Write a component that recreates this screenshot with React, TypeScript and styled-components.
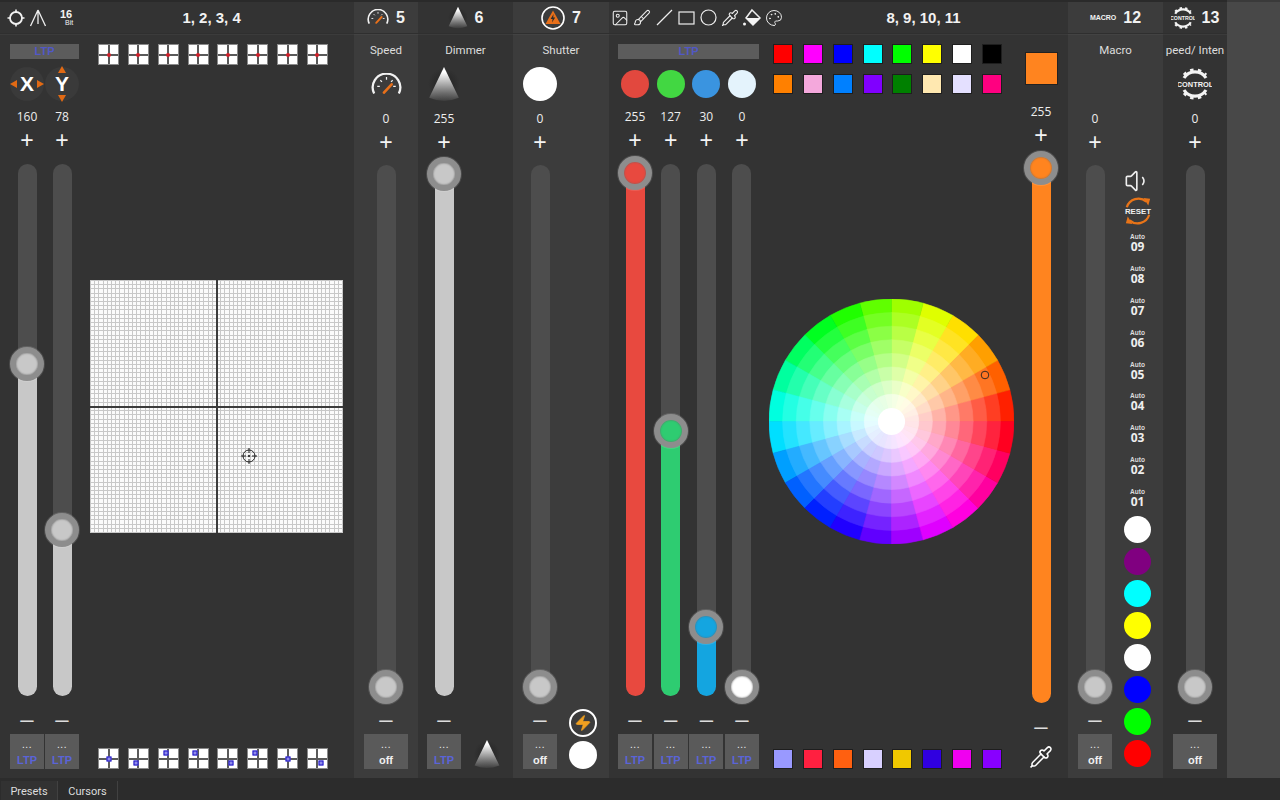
import React from "react";
import styled, { createGlobalStyle } from "styled-components";
import { Brush, Image, Palette, Pipette, Volume1, Zap } from "lucide-react";

const GlobalStyle = createGlobalStyle`
  html, body {
    margin: 0;
    padding: 0;
    background: #2c2c2c;
    font-family: "Open Sans", "Liberation Sans", sans-serif;
    color: #eee;
  }
  * { box-sizing: border-box; }
`;

const Page = styled.div`
  width: 1280px;
  height: 800px;
  display: flex;
  flex-direction: column;
  overflow: hidden;
`;

const Main = styled.div`
  height: 778px;
  display: flex;
`;

const Section = styled.section<{ $width: number; $light?: boolean }>`
  width: ${(p) => p.$width}px;
  flex: none;
  display: flex;
  flex-direction: column;
  background: ${(p) => (p.$light ? "#3c3c3c" : "#333333")};
  border-top: 2px solid #2a2a2a;
`;

const Filler = styled.div`
  flex: 1;
  background: #484848;
  border-top: 2px solid #3a3a3a;
`;

const Header = styled.header`
  height: 32px;
  flex: none;
  display: flex;
  align-items: center;
  justify-content: center;
  gap: 7px;
  border-bottom: 1px solid #2f2f2f;
  box-shadow: 0 1px 0 rgba(255, 255, 255, 0.04);
  font-family: "Liberation Sans", sans-serif;
  font-weight: 700;
  font-size: 16px;
  color: #f2f2f2;
`;

const HeaderLeft = styled.div<{ $pad: number }>`
  flex: none;
  display: flex;
  align-items: center;
  padding-left: ${(p) => p.$pad}px;
`;

const HeaderTitle = styled.div<{ $right: number }>`
  flex: 1;
  text-align: center;
  font-size: 15px;
  padding-right: ${(p) => p.$right}px;
`;

const HeaderGroup = styled(Header)`
  justify-content: flex-start;
  gap: 0;
`;

const ToolIcon = styled.span`
  width: 22px;
  height: 20px;
  display: flex;
  align-items: center;
  justify-content: center;
  color: #eee;
`;

const BitBadge = styled.span`
  margin-left: 8px;
  display: flex;
  flex-direction: column;
  align-items: center;
  font-size: 11px;
  line-height: 9px;
  padding-left: 2px;
  small {
    font-size: 7px;
    font-weight: 400;
    line-height: 7px;
    margin-left: 6px;
  }
`;

const MacroTag = styled.span`
  font-size: 7px;
  letter-spacing: 0;
`;

const Body = styled.div`
  flex: 1;
  min-height: 0;
  display: flex;
  padding-bottom: 9px;
`;

const LeftColumn = styled.div<{ $width: number; $pad: number }>`
  width: ${(p) => p.$width}px;
  margin-left: ${(p) => p.$pad}px;
  flex: none;
  display: flex;
  flex-direction: column;
  padding-top: 10px;
`;

const LtpBar = styled.div`
  height: 15px;
  flex: none;
  background: #5c5c5c;
  color: #5158c6;
  font-family: "Liberation Sans", sans-serif;
  font-weight: 700;
  font-size: 11px;
  line-height: 15px;
  text-align: center;
`;

const TopRow = styled.div<{ $gap: number }>`
  height: 49px;
  flex: none;
  display: flex;
  align-items: center;
  gap: ${(p) => p.$gap}px;
`;

const Channels = styled.div<{ $gap?: number }>`
  flex: 1;
  min-height: 0;
  display: flex;
  gap: ${(p) => p.$gap ?? 0}px;
`;

const ChannelWrap = styled.div<{ $width: number }>`
  width: ${(p) => p.$width}px;
  flex: none;
  display: flex;
  flex-direction: column;
  align-items: center;
`;

const Value = styled.div`
  height: 18px;
  line-height: 18px;
  font-size: 12px;
  color: #eee;
  white-space: nowrap;
`;

const Plus = styled.div<{ $gap: number }>`
  height: 24px;
  margin-top: 2px;
  margin-bottom: ${(p) => p.$gap}px;
  font-family: "Liberation Sans", sans-serif;
  font-size: 23px;
  line-height: 25px;
  color: #f4f4f4;
`;

const Minus = styled.div`
  height: 24px;
  margin-top: 12px;
  font-family: "Liberation Sans", sans-serif;
  font-size: 24px;
  line-height: 22px;
  color: #ddd;
`;

const Track = styled.div`
  position: relative;
  width: 19px;
  flex: 1;
  min-height: 0;
  background: #4d4d4d;
  border-radius: 10px;
`;

const Fill = styled.div<{ $color: string }>`
  position: absolute;
  left: 0;
  right: 0;
  bottom: 0;
  background: ${(p) => p.$color};
  border-radius: 0 0 10px 10px;
`;

const Knob = styled.div<{ $color: string }>`
  position: absolute;
  left: 50%;
  width: 34px;
  height: 34px;
  transform: translate(-50%, -50%);
  border-radius: 50%;
  background: ${(p) => p.$color};
  border: 6px solid #8d8d8d;
  box-shadow: 0 0 0 1px rgba(255, 255, 255, 0.12), inset 0 0 2px #666;
`;

const ChannelButton = styled.div`
  width: 100%;
  height: 35px;
  margin-top: 2px;
  flex: none;
  display: flex;
  flex-direction: column;
  align-items: center;
  padding-top: 4px;
  background: #5a5a5a;
  font-family: "Liberation Sans", sans-serif;
  font-weight: 700;
  font-size: 11px;
  line-height: 12px;
`;

const Dots = styled.span`
  height: 13px;
  font-size: 10px;
  font-weight: 400;
  line-height: 13px;
  letter-spacing: 0.5px;
  color: #eee;
`;

const ButtonText = styled.span<{ $off?: boolean }>`
  color: ${(p) => (p.$off ? "#f0f0f0" : "#5a64d8")};
  line-height: 18px;
`;

type ChannelProps = {
  value: number;
  width: number;
  color?: string;
  knob?: string;
  gap?: number;
  mode?: string;
  children?: React.ReactNode;
};

function Channel({ value, width, color = "#c8c8c8", knob, gap = 12, mode, children }: ChannelProps) {
  const ratio = value / 255;
  return (
    <ChannelWrap $width={width}>
      <Value>{value}</Value>
      <Plus $gap={gap}>+</Plus>
      <Track>
        <Fill $color={color} style={{ height: `calc(9px + (100% - 18px) * ${ratio})` }} />
        <Knob
          $color={knob ?? color}
          style={{ top: `calc(9px + (100% - 18px) * ${1 - ratio})` }}
        />
      </Track>
      <Minus>–</Minus>
      {children ?? (
        <ChannelButton>
          <Dots>...</Dots>
          <ButtonText $off={mode === "off"}>{mode ?? "LTP"}</ButtonText>
        </ChannelButton>
      )}
    </ChannelWrap>
  );
}

const XYBadge = styled.div`
  position: relative;
  width: 34px;
  height: 34px;
  flex: none;
  border-radius: 50%;
  background: #3a3a3a;
  display: flex;
  align-items: center;
  justify-content: center;
  font-family: "Liberation Sans", sans-serif;
  font-weight: 700;
  font-size: 21px;
  color: #fff;
`;

const Arrow = styled.i<{ $dir: "left" | "right" | "up" | "down" }>`
  position: absolute;
  width: 0;
  height: 0;
  ${(p) =>
    p.$dir === "left"
      ? "left: 0; top: 13px; border-style: solid; border-width: 4px 7px 4px 0; border-color: transparent #e26a14 transparent transparent;"
      : p.$dir === "right"
      ? "right: 0; top: 13px; border-style: solid; border-width: 4px 0 4px 7px; border-color: transparent transparent transparent #e26a14;"
      : p.$dir === "up"
      ? "top: -1px; left: 13px; border-style: solid; border-width: 0 4px 7px 4px; border-color: transparent transparent #e26a14 transparent;"
      : "bottom: -1px; left: 13px; border-style: solid; border-width: 7px 4px 0 4px; border-color: #e26a14 transparent transparent transparent;"}
`;

const PadColumn = styled.div`
  flex: 1;
  margin-left: 11px;
  display: flex;
  flex-direction: column;
  justify-content: space-between;
  align-items: flex-start;
  padding-top: 10px;
`;

const PadRow = styled.div`
  display: flex;
  gap: 8.85px;
  padding-left: 8px;
`;

const MiniPad = styled.div`
  position: relative;
  width: 21px;
  height: 21px;
  border: 1px solid #8a8a8a;
  background:
    linear-gradient(#5a5a5a, #5a5a5a) center / 100% 2px no-repeat,
    linear-gradient(#5a5a5a, #5a5a5a) center / 2px 100% no-repeat,
    #fff;
`;

const PadDot = styled.i<{ $blue?: boolean }>`
  position: absolute;
  transform: translate(-50%, -50%);
  ${(p) =>
    p.$blue
      ? "width: 5px; height: 5px; border: 1.5px solid #1c12c8; background: #8f8be8;"
      : "width: 4px; height: 4px; background: #d2202a; border-radius: 50%;"}
`;

const XYPad = styled.div`
  position: relative;
  width: 253px;
  height: 253px;
  background:
    linear-gradient(#3c3c3c, #3c3c3c) center / 100% 2px no-repeat,
    linear-gradient(#3c3c3c, #3c3c3c) center / 2px 100% no-repeat,
    repeating-linear-gradient(0deg, #c8c8c8 0 1px, transparent 1px 4.2px),
    repeating-linear-gradient(90deg, #c8c8c8 0 1px, transparent 1px 4.2px),
    #fbfbfb;
`;

const Crosshair = styled.svg`
  position: absolute;
  width: 18px;
  height: 18px;
  transform: translate(-50%, -50%);
`;

const PanelLabel = styled.div`
  height: 16px;
  margin-top: 8px;
  flex: none;
  font-family: Roboto, "Liberation Sans", sans-serif;
  font-size: 11.5px;
  line-height: 16px;
  text-align: center;
  color: #ddd;
  white-space: nowrap;
  overflow: hidden;
`;

const PanelIcon = styled.div<{ $pad: number; $width: number }>`
  height: 52px;
  flex: none;
  margin-left: ${(p) => p.$pad}px;
  width: ${(p) => p.$width}px;
  display: flex;
  align-items: center;
  justify-content: center;
`;

const PanelChannels = styled.div<{ $pad: number }>`
  flex: 1;
  min-height: 0;
  display: flex;
  padding: 0 0 9px ${(p) => p.$pad}px;
`;

const SideColumn = styled.div`
  flex: 1;
  display: flex;
  flex-direction: column;
  align-items: center;
  justify-content: flex-end;
  gap: 4px;
`;

const Dot = styled.div<{ $size: number; $color: string }>`
  width: ${(p) => p.$size}px;
  height: ${(p) => p.$size}px;
  flex: none;
  border-radius: 50%;
  background: ${(p) => p.$color};
`;

const DotCell = styled.div`
  width: 34px;
  flex: none;
  display: flex;
  justify-content: center;
`;

const BoltRing = styled.div`
  width: 28px;
  height: 28px;
  flex: none;
  border-radius: 50%;
  border: 2px solid #fff;
  display: flex;
  align-items: center;
  justify-content: center;
  color: #f0a020;
`;

const MacroColumn = styled.div`
  flex: 1;
  display: flex;
  flex-direction: column;
  align-items: center;
  padding-top: 58px;
`;

const SpeakerBox = styled.div`
  height: 26px;
  color: #eee;
  display: flex;
  align-items: center;
`;

const ResetBox = styled.div`
  height: 31px;
  margin-top: 2px;
  padding-top: 1px;
`;

const ListItem = styled.div`
  height: 31.9px;
  flex: none;
  display: flex;
  flex-direction: column;
  align-items: center;
  justify-content: center;
`;

const AutoTag = styled.span`
  font-family: "Liberation Sans", sans-serif;
  font-size: 6.5px;
  font-weight: 700;
  line-height: 8px;
  color: #ddd;
`;

const AutoNumber = styled.span`
  font-size: 12px;
  font-weight: 700;
  line-height: 12px;
  color: #eee;
`;

const WheelColumn = styled.div`
  width: 245px;
  margin-left: 10px;
  flex: none;
  display: flex;
  flex-direction: column;
  justify-content: space-between;
  padding-top: 10px;
`;

const WheelSvg = styled.svg`
  display: block;
  filter: blur(0.4px);
`;

const SwatchGrid = styled.div`
  display: grid;
  grid-template-columns: repeat(8, 20px);
  column-gap: 9.85px;
  row-gap: 10px;
  padding-left: 4px;
`;

const Swatch = styled.div<{ $color: string }>`
  width: 20px;
  height: 20px;
  background: ${(p) => p.$color};
  border: 1px solid #1e1e1e;
`;

const OrangeColumn = styled.div`
  flex: 1;
  display: flex;
  flex-direction: column;
  align-items: center;
  padding-top: 18px;
`;

const BigSwatch = styled.div`
  width: 33px;
  height: 33px;
  flex: none;
  margin-bottom: 18px;
  background: #ff841f;
  border: 1px solid #222;
`;

const PipetteSlot = styled.div`
  height: 30px;
  flex: none;
  display: flex;
  align-items: flex-end;
  color: #fff;
`;

const TabBar = styled.nav`
  height: 22px;
  flex: none;
  display: flex;
  align-items: flex-end;
  padding-left: 1px;
  background: #2c2c2c;
`;

const Tab = styled.div<{ $width: number }>`
  width: ${(p) => p.$width}px;
  height: 19px;
  border-right: 1px solid #414141;
  font-family: Roboto, "Liberation Sans", sans-serif;
  font-size: 11px;
  line-height: 22px;
  text-align: center;
  color: #ddd;
  background: ${(p) => (p.$width < 58 ? "#323232" : "#2c2c2c")};
`;

function Gauge({ size }: { size: number }) {
  return (
    <svg width={size} height={size * 0.73} viewBox="0 0 30 22" fill="none">
      <path d="M3 20 A13.4 13.4 0 1 1 27 20" stroke="#f2f2f2" strokeWidth="2.2" />
      <path d="M6 13 h2.5 M15 4 v2.5 M24 13 h-2.5 M9 7 l1.6 1.6 M21 7 l-1.6 1.6" stroke="#f2f2f2" strokeWidth="1.2" />
      <path d="M12.5 19 L20 11" stroke="#e8701a" strokeWidth="2.6" strokeLinecap="round" />
    </svg>
  );
}

function Cone({ width, height, id }: { width: number; height: number; id: string }) {
  return (
    <svg width={width} height={height} viewBox="0 0 30 34">
      <defs>
        <radialGradient id={`${id}-halo`}>
          <stop offset="0.6" stopColor="#262626" stopOpacity="0.55" />
          <stop offset="1" stopColor="#262626" stopOpacity="0" />
        </radialGradient>
        <linearGradient id={id} x1="0" y1="0" x2="0" y2="1">
          <stop offset="0.15" stopColor="#ffffff" />
          <stop offset="1" stopColor="#ffffff" stopOpacity="0.05" />
        </linearGradient>
      </defs>
      <circle cx="15" cy="17" r="15" fill={`url(#${id}-halo)`} />
      <path d="M15 1 L29 30 Q15 36 1 30 Z" fill={`url(#${id})`} />
    </svg>
  );
}

function ControlGear({ size }: { size: number }) {
  return (
    <svg width={size} height={size} viewBox="0 0 34 34" fill="none">
      <path d="M6 11 A13 13 0 0 1 28 11" stroke="#f4f4f4" strokeWidth="3.2" />
      <path d="M6 23 A13 13 0 0 0 28 23" stroke="#f4f4f4" strokeWidth="3.2" />
      <path d="M6 8 A14.5 14.5 0 0 1 28 8" stroke="#f4f4f4" strokeWidth="3" strokeDasharray="3.4 4.2" />
      <path d="M6 26 A14.5 14.5 0 0 0 28 26" stroke="#f4f4f4" strokeWidth="3" strokeDasharray="3.4 4.2" />
      <text x="17" y="20" textAnchor="middle" fontFamily="Liberation Sans" fontWeight="700" fontSize="7.4" fill="#f4f4f4">
        CONTROL
      </text>
    </svg>
  );
}

function ResetIcon() {
  return (
    <svg width="28" height="28" viewBox="0 0 30 30" fill="none">
      <path d="M3 11 A13 13 0 0 1 24 5" stroke="#e87418" strokeWidth="2.4" />
      <path d="M27 19 A13 13 0 0 1 6 25" stroke="#e87418" strokeWidth="2.4" />
      <path d="M21 1 L28 2 L26 9 Z" fill="#e87418" />
      <path d="M9 29 L2 28 L4 21 Z" fill="#e87418" />
      <text x="15" y="18" textAnchor="middle" fontFamily="Liberation Sans" fontWeight="700" fontSize="8.4" fill="#f0f0f0">
        RESET
      </text>
    </svg>
  );
}

function FillIcon() {
  return (
    <svg width="20" height="20" viewBox="0 0 20 20" fill="none">
      <path d="M10 2 L18 10 L11 17 L4 10 Z" stroke="#eee" strokeWidth="1.5" />
      <path d="M4 10 H18 L11 17 Z" fill="#f4f4f4" />
      <circle cx="2.5" cy="16" r="1.5" fill="#f4f4f4" />
    </svg>
  );
}

function ColorWheel({ size }: { size: number }) {
  const rings = 9;
  const sectors = 24;
  const radius = size / 2;
  const step = radius / rings;
  const point = (r: number, deg: number) => {
    const a = (deg * Math.PI) / 180;
    return `${radius + r * Math.cos(a)} ${radius - r * Math.sin(a)}`;
  };
  const cells = [];
  for (let ring = rings - 1; ring > 0; ring--) {
    for (let s = 0; s < sectors; s++) {
      const a0 = s * 15;
      const a1 = a0 + 15;
      const r1 = (ring + 1) * step;
      // lightness falls off slowly near the middle, like the original wheel
      const light = 100 - 50 * Math.pow(ring / (rings - 1), 1.1);
      const color = `hsl(${a0 + 7.5}, 100%, ${light}%)`;
      cells.push(
        <path
          key={`${ring}-${s}`}
          d={`M${radius} ${radius} L${point(r1, a0)} A${r1} ${r1} 0 0 0 ${point(r1, a1)} Z`}
          fill={color}
          stroke={color}
          strokeWidth="0.6"
        />
      );
    }
  }
  return (
    <WheelSvg width={size} height={size} viewBox={`0 0 ${size} ${size}`}>
      {cells}
      <circle cx={radius} cy={radius} r={step} fill="#fff" />
      <circle cx="216" cy="76" r="3.8" fill="none" stroke="#3a2a20" strokeWidth="1" />
    </WheelSvg>
  );
}

const topPads = Array.from({ length: 8 }, () => ({ x: 0.5, y: 0.5 }));
const bottomPads = [
  { x: 0.5, y: 0.5 },
  { x: 0.37, y: 0.76 },
  { x: 0.37, y: 0.2 },
  { x: 0.35, y: 0.2 },
  { x: 0.68, y: 0.76 },
  { x: 0.35, y: 0.2 },
  { x: 0.5, y: 0.5 },
  { x: 0.7, y: 0.74 },
];

const paletteTop = [
  "#ff0000", "#ff00ff", "#0000ff", "#00ffff", "#00ff00", "#ffff00", "#ffffff", "#000000",
  "#ff8000", "#f4a8dc", "#0080ff", "#8000ff", "#008000", "#ffe8b0", "#e4e0ff", "#ff0080",
];
const paletteBottom = ["#9999ff", "#ff2040", "#ff6010", "#d8d0ff", "#f0c800", "#3000e0", "#f000f0", "#8800ff"];
const macroDots = ["#ffffff", "#800080", "#00ffff", "#ffff00", "#ffffff", "#0000ff", "#00ff00", "#ff0000"];
const autos = ["09", "08", "07", "06", "05", "04", "03", "02", "01"];

const colorChannels = [
  { value: 255, swatch: "#e2483e", fill: "#e8493f", knob: "#e8493f" },
  { value: 127, swatch: "#42d742", fill: "#2ecc71", knob: "#2ecc71" },
  { value: 30, swatch: "#3a94e0", fill: "#14a5e0", knob: "#14a5e0" },
  { value: 0, swatch: "#e4f3fc", fill: "#4d4d4d", knob: "#ffffff" },
];

export default function App() {
  const xValue = 160;
  const yValue = 78;

  return (
    <Page>
      <GlobalStyle />
      <Main>
        <Section $width={354}>
          <HeaderGroup>
            <HeaderLeft $pad={5}>
              <ToolIcon>
                <svg width="18" height="18" viewBox="0 0 18 18" fill="none" stroke="#f2f2f2">
                  <circle cx="9" cy="9" r="6" strokeWidth="1.8" />
                  <path d="M9 0.5 V4 M9 14 V17.5 M0.5 9 H4 M14 9 H17.5" strokeWidth="1.6" />
                </svg>
              </ToolIcon>
              <ToolIcon>
                <svg width="18" height="18" viewBox="0 0 18 18" fill="none" stroke="#eee" strokeWidth="1.3">
                  <path d="M9 1 L1.5 17 M9 1 L16.5 17 M9 1 V15" />
                </svg>
              </ToolIcon>
              <BitBadge>
                16
                <small>Bit</small>
              </BitBadge>
            </HeaderLeft>
            <HeaderTitle $right={4}>1, 2, 3, 4</HeaderTitle>
          </HeaderGroup>
          <Body>
            <LeftColumn $width={69} $pad={10}>
              <LtpBar>LTP</LtpBar>
              <TopRow $gap={1}>
                <XYBadge>
                  <Arrow $dir="left" />X<Arrow $dir="right" />
                </XYBadge>
                <XYBadge>
                  <Arrow $dir="up" />Y<Arrow $dir="down" />
                </XYBadge>
              </TopRow>
              <Channels $gap={1}>
                <Channel value={xValue} width={34} />
                <Channel value={yValue} width={34} />
              </Channels>
            </LeftColumn>
            <PadColumn>
              <PadRow>
                {topPads.map((pad, i) => (
                  <MiniPad key={i}>
                    <PadDot style={{ left: `${pad.x * 100}%`, top: `${pad.y * 100}%` }} />
                  </MiniPad>
                ))}
              </PadRow>
              <XYPad>
                <Crosshair
                  viewBox="0 0 18 18"
                  fill="none"
                  stroke="#222"
                  style={{ left: `${(xValue / 255) * 100}%`, top: `${(1 - yValue / 255) * 100}%` }}
                >
                  <circle cx="9" cy="9" r="6" strokeWidth="1" />
                  <path d="M9 1 V6 M9 12 V17 M1 9 H6 M12 9 H17" strokeWidth="1" />
                  <circle cx="9" cy="9" r="0.8" fill="#222" />
                </Crosshair>
              </XYPad>
              <PadRow>
                {bottomPads.map((pad, i) => (
                  <MiniPad key={i}>
                    <PadDot $blue style={{ left: `${pad.x * 100}%`, top: `${pad.y * 100}%` }} />
                  </MiniPad>
                ))}
              </PadRow>
            </PadColumn>
          </Body>
        </Section>

        <Section $width={64} $light>
          <Header>
            <Gauge size={22} />
            <span>5</span>
          </Header>
          <PanelLabel>Speed</PanelLabel>
          <PanelIcon $pad={10} $width={44}>
            <Gauge size={31} />
          </PanelIcon>
          <PanelChannels $pad={10}>
            <Channel value={0} width={44} gap={11} mode="off" />
          </PanelChannels>
        </Section>

        <Section $width={95}>
          <Header>
            <Cone width={20} height={23} id="cone-head" />
            <span>6</span>
          </Header>
          <PanelLabel>Dimmer</PanelLabel>
          <PanelIcon $pad={9} $width={34}>
            <Cone width={32} height={36} id="cone-panel" />
          </PanelIcon>
          <PanelChannels $pad={9}>
            <Channel value={255} width={34} gap={11} />
            <SideColumn>
              <Cone width={28} height={30} id="cone-side" />
            </SideColumn>
          </PanelChannels>
        </Section>

        <Section $width={96} $light>
          <Header>
            <svg width="24" height="24" viewBox="0 0 24 24" fill="none">
              <circle cx="12" cy="12" r="11" stroke="#fff" strokeWidth="1.6" />
              <path d="M12 4.5 L19.5 18 H4.5 Z" fill="#e8701a" />
              <path d="M12.6 8 L9.6 13 H11.6 L11 16.5 L14.2 11.6 H12.2 Z" fill="#2c2c2c" />
            </svg>
            <span>7</span>
          </Header>
          <PanelLabel>Shutter</PanelLabel>
          <PanelIcon $pad={10} $width={34}>
            <Dot $size={34} $color="#fff" />
          </PanelIcon>
          <PanelChannels $pad={10}>
            <Channel value={0} width={34} gap={11} mode="off" />
            <SideColumn>
              <BoltRing>
                <Zap size={18} fill="#f0a020" strokeWidth={1} />
              </BoltRing>
              <Dot $size={28} $color="#fff" />
            </SideColumn>
          </PanelChannels>
        </Section>

        <Section $width={459}>
          <HeaderGroup>
            <HeaderLeft $pad={0}>
              <ToolIcon><Image size={18} strokeWidth={1.4} /></ToolIcon>
              <ToolIcon><Brush size={18} strokeWidth={1.4} /></ToolIcon>
              <ToolIcon>
                <svg width="17" height="17" viewBox="0 0 17 17" stroke="#eee" strokeWidth="1.2">
                  <path d="M1 16 L16 1" />
                </svg>
              </ToolIcon>
              <ToolIcon>
                <svg width="17" height="14" viewBox="0 0 17 14" fill="none" stroke="#eee" strokeWidth="1.2">
                  <rect x="1" y="1" width="15" height="12" />
                </svg>
              </ToolIcon>
              <ToolIcon>
                <svg width="17" height="17" viewBox="0 0 17 17" fill="none" stroke="#eee" strokeWidth="1.2">
                  <circle cx="8.5" cy="8.5" r="7.5" />
                </svg>
              </ToolIcon>
              <ToolIcon><Pipette size={18} strokeWidth={1.5} /></ToolIcon>
              <ToolIcon><FillIcon /></ToolIcon>
              <ToolIcon><Palette size={18} strokeWidth={1.3} /></ToolIcon>
            </HeaderLeft>
            <HeaderTitle $right={6}>8, 9, 10, 11</HeaderTitle>
          </HeaderGroup>
          <Body>
            <LeftColumn $width={141} $pad={9}>
              <LtpBar>LTP</LtpBar>
              <TopRow $gap={1.67}>
                {colorChannels.map((c) => (
                  <DotCell key={c.swatch}>
                    <Dot $size={28} $color={c.swatch} />
                  </DotCell>
                ))}
              </TopRow>
              <Channels $gap={1.67}>
                {colorChannels.map((c) => (
                  <Channel key={c.swatch} value={c.value} width={34} color={c.fill} knob={c.knob} />
                ))}
              </Channels>
            </LeftColumn>
            <WheelColumn>
              <SwatchGrid>
                {paletteTop.map((color) => (
                  <Swatch key={color} $color={color} />
                ))}
              </SwatchGrid>
              <ColorWheel size={245} />
              <SwatchGrid>
                {paletteBottom.map((color) => (
                  <Swatch key={color} $color={color} />
                ))}
              </SwatchGrid>
            </WheelColumn>
            <OrangeColumn>
              <BigSwatch />
              <Channels>
                <Channel value={255} width={54} color="#ff841f">
                  <PipetteSlot>
                    <Pipette size={24} strokeWidth={1.5} />
                  </PipetteSlot>
                </Channel>
              </Channels>
            </OrangeColumn>
          </Body>
        </Section>

        <Section $width={95} $light>
          <Header>
            <MacroTag>MACRO</MacroTag>
            <span>12</span>
          </Header>
          <PanelLabel>Macro</PanelLabel>
          <PanelIcon $pad={10} $width={34} />
          <PanelChannels $pad={10}>
            <Channel value={0} width={34} gap={11} mode="off" />
            <MacroColumn>
              <SpeakerBox>
                <Volume1 size={28} strokeWidth={1.4} />
              </SpeakerBox>
              <ResetBox>
                <ResetIcon />
              </ResetBox>
              {autos.map((a) => (
                <ListItem key={a}>
                  <AutoTag>Auto</AutoTag>
                  <AutoNumber>{a}</AutoNumber>
                </ListItem>
              ))}
              {macroDots.map((color, i) => (
                <ListItem key={i}>
                  <Dot $size={27} $color={color} />
                </ListItem>
              ))}
            </MacroColumn>
          </PanelChannels>
        </Section>

        <Section $width={64}>
          <Header>
            <ControlGear size={24} />
            <span>13</span>
          </Header>
          <PanelLabel>peed/ Inten</PanelLabel>
          <PanelIcon $pad={10} $width={44}>
            <ControlGear size={34} />
          </PanelIcon>
          <PanelChannels $pad={10}>
            <Channel value={0} width={44} gap={11} mode="off" />
          </PanelChannels>
        </Section>

        <Filler />
      </Main>
      <TabBar>
        <Tab $width={57}>Presets</Tab>
        <Tab $width={60}>Cursors</Tab>
      </TabBar>
    </Page>
  );
}
